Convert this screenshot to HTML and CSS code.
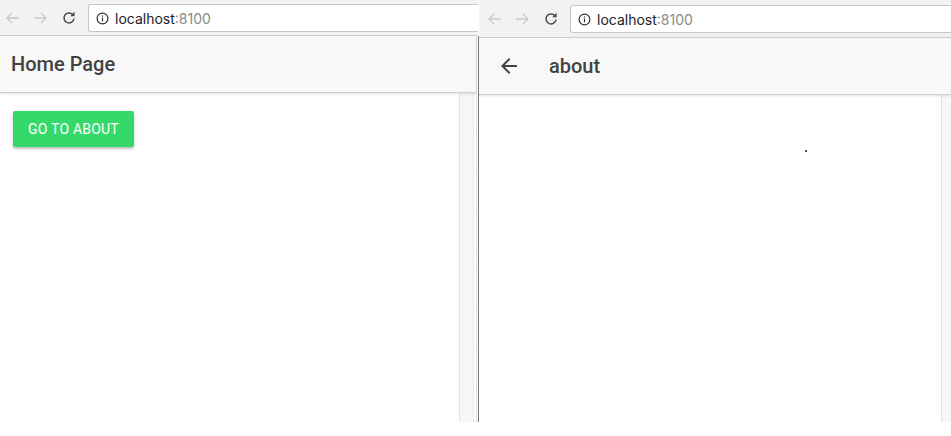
FILE: index.html
```html
<!DOCTYPE html>
<html>
<head>
<meta charset="utf-8">
<link rel="stylesheet" href="styles.css">
</head>
<body>
<div class="screens">
  <section class="win win-left">
    <div class="chrome">
      <div class="nav">
        <svg class="nav-icon off" viewBox="0 0 16 16"><path d="M14 8H2M7 3L2 8l5 5" fill="none" stroke="currentColor" stroke-width="1.3"/></svg>
        <svg class="nav-icon off" viewBox="0 0 16 16"><path d="M2 8h12M9 3l5 5-5 5" fill="none" stroke="currentColor" stroke-width="1.3"/></svg>
        <svg class="nav-icon reload" viewBox="0 0 16 16"><path d="M13 8.5A5 5 0 1 1 11.6 4.4" fill="none" stroke="currentColor" stroke-width="1.5"/><path d="M13.6 1.8v4.4H9.2z" fill="currentColor"/></svg>
      </div>
      <div class="omnibox">
        <svg class="info" viewBox="0 0 14 14"><circle cx="7" cy="7" r="5.8" fill="none" stroke="currentColor" stroke-width="1.3"/><rect x="6.35" y="6" width="1.3" height="4" fill="currentColor"/><rect x="6.35" y="3.7" width="1.3" height="1.3" fill="currentColor"/></svg>
        <span class="host">localhost</span><span class="port">:8100</span>
      </div>
    </div>
    <div class="app">
      <header class="toolbar">
        <h1 class="title">Home Page</h1>
      </header>
      <div class="body">
        <div class="content">
          <button class="btn">GO TO ABOUT</button>
        </div>
        <div class="scrollbar"></div>
      </div>
    </div>
  </section>
  <div class="divider"></div>
  <section class="win win-right">
    <div class="chrome chrome-right">
      <div class="nav">
        <svg class="nav-icon off" viewBox="0 0 16 16"><path d="M14 8H2M7 3L2 8l5 5" fill="none" stroke="currentColor" stroke-width="1.3"/></svg>
        <svg class="nav-icon off" viewBox="0 0 16 16"><path d="M2 8h12M9 3l5 5-5 5" fill="none" stroke="currentColor" stroke-width="1.3"/></svg>
        <svg class="nav-icon reload" viewBox="0 0 16 16"><path d="M13 8.5A5 5 0 1 1 11.6 4.4" fill="none" stroke="currentColor" stroke-width="1.5"/><path d="M13.6 1.8v4.4H9.2z" fill="currentColor"/></svg>
      </div>
      <div class="omnibox">
        <svg class="info" viewBox="0 0 14 14"><circle cx="7" cy="7" r="5.8" fill="none" stroke="currentColor" stroke-width="1.3"/><rect x="6.35" y="6" width="1.3" height="4" fill="currentColor"/><rect x="6.35" y="3.7" width="1.3" height="1.3" fill="currentColor"/></svg>
        <span class="host">localhost</span><span class="port">:8100</span>
      </div>
    </div>
    <div class="app app-right">
      <header class="toolbar toolbar-right">
        <svg class="back" viewBox="0 0 24 24"><path d="M20 11H7.83l5.59-5.59L12 4l-8 8 8 8 1.41-1.41L7.83 13H20v-2z" fill="currentColor"/></svg>
        <h1 class="title">about</h1>
      </header>
      <div class="body">
        <div class="content content-right">
          <span class="speck"></span>
        </div>
        <div class="scrollbar scrollbar-right"></div>
      </div>
    </div>
  </section>
</div>
</body>
</html>
```

FILE: styles.css
```css
* { box-sizing: border-box; }
html, body { margin: 0; padding: 0; background: #fff; }
body { font-family: Roboto, "Helvetica Neue", Arial, sans-serif; }

.screens {
  display: flex;
  height: 422px;
  width: 951px;
}

.win { display: flex; flex-direction: column; overflow: hidden; }
.win-left { width: 478px; }
.win-right { width: 472px; }

.divider {
  width: 1px;
  margin-top: 36px;
  background: #7a7a7a;
}

/* browser chrome */
.chrome {
  height: 36px;
  flex: none;
  display: flex;
  align-items: flex-start;
  background: #f2f2f2;
  border-bottom: 1px solid #d2d2d2;
  padding-top: 4px;
}
.chrome-right { height: 38px; padding-top: 5px; }

.nav {
  display: flex;
  align-items: center;
  height: 27px;
  padding-left: 5px;
  gap: 11px;
  width: 88px;
  flex: none;
}
.chrome-right .nav { padding-left: 8px; width: 91px; gap: 11px; }

.nav-icon { width: 16px; height: 16px; }
.nav-icon.off { color: #c9c9c9; }
.nav-icon.reload { color: #4a4a4a; margin-left: 2px; }

.omnibox {
  flex: 1;
  height: 28px;
  background: #fff;
  border: 1px solid #c6c6c6;
  border-right: none;
  border-radius: 3px 0 0 3px;
  display: flex;
  align-items: center;
  padding-left: 7px;
  font-family: Inter, Roboto, Arial, sans-serif;
  font-size: 14px;
  margin-right: -2px;
}
.info { width: 13px; height: 13px; color: #333; margin-right: 6px; }
.host { color: #222; }
.port { color: #8a8a8a; }

/* app */
.app {
  flex: 1;
  display: flex;
  flex-direction: column;
  width: 477px;
  border-right: 1px solid #dcdcdc;
}
.app-right { width: 472px; border-right: none; }

.toolbar {
  height: 57px;
  flex: none;
  background: #f8f8f8;
  border-bottom: 1px solid #cfcfcf;
  box-shadow: 0 1px 3px rgba(0,0,0,0.12);
  display: flex;
  align-items: center;
  padding-left: 11px;
  position: relative;
  z-index: 1;
}
.toolbar-right { padding-left: 18px; }

.title {
  margin: 0;
  font-family: Roboto, sans-serif;
  font-weight: 500;
  font-size: 20px;
  color: #424242;
  letter-spacing: 0;
  padding-bottom: 1px;
}
.back { width: 24px; height: 24px; color: #424242; margin-right: 28px; }

.body { flex: 1; display: flex; }
.content { flex: 1; padding: 18px 13px; }
.content-right { position: relative; }
.scrollbar {
  width: 15px;
  flex: none;
  background: #f7f7f7;
  border-left: 1px solid #e2e2e2;
  border-right: 1px dashed #e4e4e4;
  margin-right: 2px;
}
.scrollbar-right { width: 10px; margin-right: 0; border-right: none; }

.speck {
  position: absolute;
  left: 326px;
  top: 55px;
  width: 2px;
  height: 2px;
  background: #555;
}

.btn {
  height: 36px;
  width: 121px;
  border: none;
  border-radius: 2px;
  background: #35d96a;
  color: #fff;
  font-family: Roboto, sans-serif;
  font-size: 14px;
  font-weight: 400;
  letter-spacing: 0.2px;
  padding: 0;
  box-shadow: 0 2px 2px rgba(0,0,0,0.18), 0 1px 4px rgba(0,0,0,0.1);
}
```
